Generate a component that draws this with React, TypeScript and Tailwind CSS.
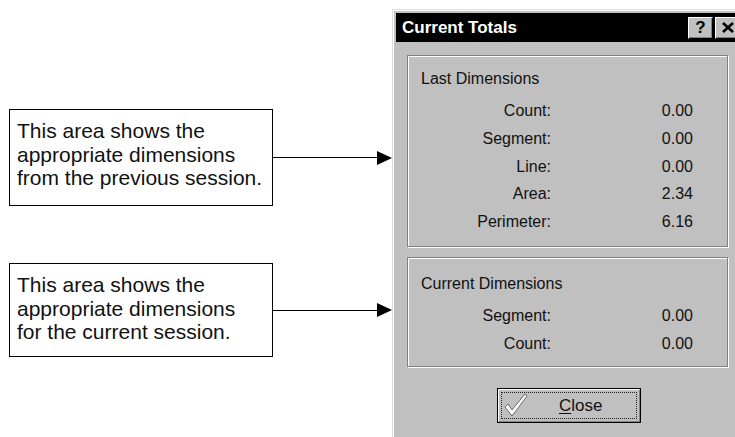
import React from 'react';

interface Row {
  label: string;
  value: string;
}

const lastRows: Row[] = [
  { label: 'Count:', value: '0.00' },
  { label: 'Segment:', value: '0.00' },
  { label: 'Line:', value: '0.00' },
  { label: 'Area:', value: '2.34' },
  { label: 'Perimeter:', value: '6.16' },
];

const currentRows: Row[] = [
  { label: 'Segment:', value: '0.00' },
  { label: 'Count:', value: '0.00' },
];

// Callout box on the left with an arrow pointing at the dialog
const Callout: React.FC<{ lines: string[]; height: string; top: string }> = ({ lines, height, top }) => (
  <div className={`flex items-center ml-[9px] ${top}`}>
    <div className={`w-[264px] ${height} shrink-0 border border-black bg-white pl-[7px] pt-[9px] text-[21px] leading-[23.5px] text-[#111]`}>
      {lines.map((l) => (
        <div key={l}>{l}</div>
      ))}
    </div>
    <div className="flex-1 h-px bg-black" />
    <svg width="15" height="14" viewBox="0 0 15 14" className="shrink-0 -ml-px">
      <polygon points="0,0 15,7 0,14" fill="#000" />
    </svg>
  </div>
);

const GroupBox: React.FC<{ title: string; rows: Row[]; className: string }> = ({ title, rows, className }) => (
  <div
    className={`ml-[11px] w-[321px] border border-[#808080] shadow-[inset_1px_1px_0_#fff,1px_1px_0_#fff] ${className}`}
  >
    <div className="pl-[13px] leading-[28px]">{title}</div>
    <div className="mt-[4px]">
      {rows.map((r) => (
        <div key={r.label} className="grid grid-cols-[143px_142px] leading-[27.75px]">
          <span className="text-right">{r.label}</span>
          <span className="text-right">{r.value}</span>
        </div>
      ))}
    </div>
  </div>
);

const App: React.FC = () => {
  return (
    <div
      className="w-[735px] h-[437px] overflow-hidden bg-white flex"
      style={{ fontFamily: '"Liberation Sans", Arial, sans-serif' }}
    >
      {/* Left column - callouts */}
      <div className="w-[392px] shrink-0 flex flex-col">
        <Callout
          top="mt-[109px]"
          height="h-[97px]"
          lines={['This area shows the', 'appropriate dimensions', 'from the previous session.']}
        />
        <Callout
          top="mt-[57px]"
          height="h-[94px]"
          lines={['This area shows the', 'appropriate dimensions', 'for the current session.']}
        />
      </div>

      {/* Right column - dialog */}
      <div className="mt-[9px] w-[352px] h-[440px] shrink-0 bg-[#c0c0c0] border-l border-t border-[#dfdfdf]">
        <div className="h-full border-l border-t border-white p-[2px] text-[16px] text-[#111]">
          <div className="h-[29px] bg-black flex items-center pl-[6px] pr-[2px]">
            <span className="flex-1 text-white font-bold text-[17px]">Current Totals</span>
            <button className="w-[25px] h-[22px] bg-[#c0c0c0] border-t border-l border-white border-r border-b border-r-black border-b-black shadow-[inset_-1px_-1px_0_#808080] flex items-center justify-center font-bold text-[17px] text-black leading-none">
              ?
            </button>
            <button className="ml-[2px] w-[25px] h-[22px] bg-[#c0c0c0] border-t border-l border-white border-r border-b border-r-black border-b-black shadow-[inset_-1px_-1px_0_#808080] flex items-center justify-center text-black">
              <svg width="12" height="11" viewBox="0 0 12 11">
                <path d="M1 1 L11 10 M11 1 L1 10" stroke="#000" strokeWidth="2.6" />
              </svg>
            </button>
          </div>

          <GroupBox title="Last Dimensions" rows={lastRows} className="mt-[13px] h-[192px] pt-[9px]" />
          <GroupBox title="Current Dimensions" rows={currentRows} className="mt-[10px] h-[110px] pt-[12px]" />

          {/* Close button */}
          <div className="mt-[21px] ml-[101px] w-[144px] h-[35px] border border-black">
            <div className="h-full border-t border-l border-white border-r border-b border-r-[#808080] border-b-[#808080] p-[2px]">
              <div className="h-full border border-dotted border-[#222] flex items-center pl-[2px]">
                <svg width="24" height="26" viewBox="0 0 24 26" className="-mt-[2px]">
                  <path
                    d="M1 15 L4 12 L8 18 L21 2 L23 4 L8 24 Z"
                    fill="#fff"
                    stroke="#6a6a6a"
                    strokeWidth="1"
                    strokeLinejoin="round"
                  />
                </svg>
                <span className="ml-[31px] text-[17px] leading-none">
                  <span className="underline underline-offset-2">C</span>lose
                </span>
              </div>
            </div>
          </div>
        </div>
      </div>
    </div>
  );
};

export default App;
